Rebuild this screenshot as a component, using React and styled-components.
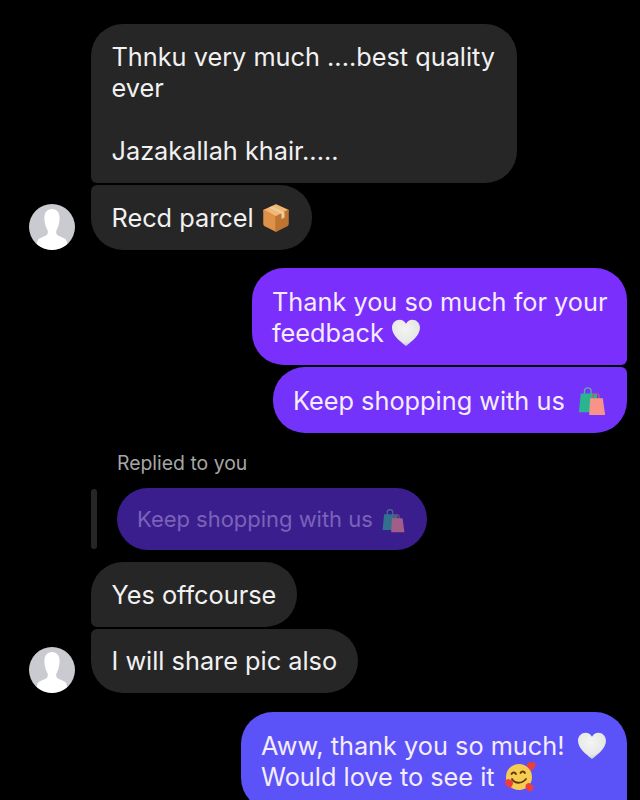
import styled, { createGlobalStyle } from "styled-components"

const GlobalStyle = createGlobalStyle`
    html, body {
        margin: 0;
        height: 800px;
        overflow: hidden;
        background: #000;
    }
`

const Thread = styled.main`
    width: 640px;
    height: 800px;
    overflow: hidden;
    box-sizing: border-box;
    padding: 24px 13px 0 29px;
    display: flex;
    flex-direction: column;
    background: #000;
    font-family: Inter, Roboto, "Liberation Sans", sans-serif;
    font-size: 25.3px;
    line-height: 31.5px;
`

const Group = styled.section`
    display: flex;
    flex-direction: column;
    gap: 2px;
    flex-shrink: 0;
    margin-bottom: ${({$after}) => $after || 0}px;
`

const Row = styled.div`
    display: flex;
    align-items: flex-end;
    justify-content: ${({$mine}) => $mine ? "flex-end" : "flex-start"};
    gap: 16px;
`

const AvatarSlot = styled.div`
    width: 46px;
    height: 46px;
    flex-shrink: 0;
`

const AvatarCircle = styled.svg`
    display: block;
    width: 46px;
    height: 46px;
    border-radius: 50%;
`

const Bubble = styled.div`
    box-sizing: border-box;
    flex-shrink: 0;
    width: ${({$width}) => $width ? `${$width}px` : "auto"};
    padding: ${({$mine}) => $mine ? "17.5px 0 16.5px 20px" : "16.5px 21px 16.5px 20.5px"};
    color: ${({$mine}) => $mine ? "#f5ecff" : "#f1f1f1"};
    background: ${({$color}) => $color || "#262626"};
    border-radius: ${({$corners}) => $corners};
    white-space: pre;
`

const RepliedLabel = styled.div`
    margin: 17.5px 0 12px 88px;
    color: #a6a6a6;
    font-size: 19.4px;
    line-height: 26px;
`

const ReplyRow = styled.div`
    display: flex;
    align-items: center;
    gap: 20px;
    margin: 0 0 12px 62px;
`

const ReplyBar = styled.div`
    width: 6px;
    height: 60px;
    border-radius: 3px;
    background: #262626;
`

const ReplyBubble = styled.div`
    box-sizing: border-box;
    width: 310px;
    height: 62px;
    padding: 2px 20px 0;
    display: flex;
    align-items: center;
    gap: 8px;
    border-radius: 31px;
    background: #3a1e8e;
    color: #7a62b8;
    font-size: 21.96px;
`

const EmojiSvg = styled.svg`
    display: inline-block;
    width: ${({$size}) => $size || 30}px;
    height: ${({$size}) => $size || 30}px;
    vertical-align: ${({$drop}) => $drop ?? -6}px;
    margin-left: ${({$gap}) => $gap ?? 0}px;
    opacity: ${({$dim}) => $dim ? 0.55 : 1};
    flex-shrink: 0;
`

const Avatar = () => (
    <AvatarSlot>
        <AvatarCircle viewBox="0 0 46 46">
            <rect width="46" height="46" fill="#cacbd1" />
            <path
                fill="#fff"
                d="M23 5c-5 0-7.800 4-7.600 9.500.2 4.800 1.400 8.800 3 11.500.8 1.400.6 3.800-.8 5-2.300 1.800-7 2.600-8.800 5.200-.8 1.200-1 2.600-1 4.300C11.500 44 17 46 23 46s11.500-2 15.200-5.500c0-1.700-.2-3.100-1-4.300-1.800-2.600-6.500-3.400-8.800-5.200-1.400-1.200-1.600-3.600-.8-5 1.600-2.700 2.800-6.700 3-11.500C30.800 9 28 5 23 5z"
            />
        </AvatarCircle>
    </AvatarSlot>
)

const ParcelEmoji = () => (
    <EmojiSvg viewBox="0 0 30 30">
        <g strokeLinejoin="round" strokeWidth="1.500">
            <path fill="#f4b670" stroke="#f4b670" d="M15 2 27 7.500 15 14 3 7.500z" />
            <path fill="#dd9149" stroke="#dd9149" d="M3 7.500 15 14v14L4 22.500c-.7-.4-1-1-1-1.800z" />
            <path fill="#bf7430" stroke="#bf7430" d="M27 7.500 15 14v14l11-5.500c.7-.4 1-1 1-1.800z" />
        </g>
        <path fill="#e8cb9f" d="M8 4.500 20.500 11v5l3-1.500v-5L11 3.200z" />
    </EmojiSvg>
)

const HeartEmoji = ({ $gap }) => (
    <EmojiSvg viewBox="0 0 30 30" $gap={$gap}>
        <defs>
            <radialGradient id="heartShade" cx="45%" cy="35%" r="70%">
                <stop offset="0%" stopColor="#f4f5f3" />
                <stop offset="70%" stopColor="#e6e8e5" />
                <stop offset="100%" stopColor="#bfc2c4" />
            </radialGradient>
        </defs>
        <path
            fill="url(#heartShade)"
            d="M15 28C8 22.500 1 17 1 9.800 1 5 4.700 1.800 8.600 1.800c2.700 0 5 1.400 6.400 3.900 1.400-2.500 3.700-3.900 6.400-3.900C25.300 1.800 29 5 29 9.800 29 17 22 22.500 15 28z"
        />
    </EmojiSvg>
)

const BagsEmoji = ({ $size, $dim, $gap }) => (
    <EmojiSvg viewBox="0 0 30 32" $size={$size} $dim={$dim} $gap={$gap}>
        <path fill="none" stroke="#5fa8a0" strokeWidth="1.500" d="M7 9V5c0-4 7-4 7 0v4" />
        <path fill="#2bb58f" d="M3 8h17l1.500 20H1z" />
        <path fill="none" stroke="#b0606a" strokeWidth="1.500" d="M16 14v-3c0-3.500 6.500-3.500 6.500 0v3" />
        <path fill="#f8938a" d="M13 13h13.500L29 31H12z" />
    </EmojiSvg>
)

const HugEmoji = () => (
    <EmojiSvg viewBox="0 0 32 32" $size={32} $drop={-7} $gap={2}>
        <circle cx="15" cy="16" r="13" fill="#f8cc4e" />
        <path fill="none" stroke="#5a3a1a" strokeWidth="1.800" strokeLinecap="round" d="M7.500 13c1-2 3.500-2 4.500 0M16.500 12c1-2 3.500-2 4.500 0" />
        <path fill="none" stroke="#5a3a1a" strokeWidth="1.800" strokeLinecap="round" d="M8 18c3 5 10 5 14 0" />
        <path fill="#ec3f3c" d="M26 1c-2 0-3 1.500-3 3 0 2.500 3 4.500 4.500 5.500C29 8.500 31.500 6.500 31.500 4c0-1.500-1-3-2.500-3-1 0-1.800.5-2 1.200C26.800 1.500 26.600 1 26 1z" />
        <path fill="#ec3f3c" d="M5 18c-2 0-4 1.500-4 3.500 0 3 3.500 5 5.500 5.500 1.500-1.500 3-4 2.500-6-.4-1.700-2-2.500-3-2.100C5.700 18.300 5.400 18 5 18z" />
        <path fill="#ec3f3c" d="M25 22c-2 0-3.500 1.500-3.500 3.500 0 2.500 3 4.500 5 5.500 1.500-1.500 3.500-3.500 3-5.500-.4-1.700-2-2.400-3-2-.3-.8-.9-1.500-1.500-1.500z" />
    </EmojiSvg>
)

const App = () => (
    <>
        <GlobalStyle />
        <Thread>
            <Group $after={18.5}>
                <Row>
                    <AvatarSlot />
                    <Bubble $width={426} $corners="32px 32px 32px 6px">
                        {"Thnku very much ....best quality\never\n\nJazakallah khair....."}
                    </Bubble>
                </Row>
                <Row>
                    <Avatar />
                    <Bubble $corners="6px 32px 32px 32px">
                        Recd parcel <ParcelEmoji />
                    </Bubble>
                </Row>
            </Group>

            <Group>
                <Row $mine>
                    <Bubble $mine $width={375} $color="#7a2ffd" $corners="32px 32px 6px 32px">
                        {"Thank you so much for your\nfeedback "}<HeartEmoji />
                    </Bubble>
                </Row>
                <Row $mine>
                    <Bubble $mine $width={354} $color="#7433fb" $corners="32px 6px 32px 32px">
                        Keep shopping with us <BagsEmoji $gap={5} />
                    </Bubble>
                </Row>
            </Group>

            <RepliedLabel>Replied to you</RepliedLabel>
            <ReplyRow>
                <ReplyBar />
                <ReplyBubble>
                    Keep shopping with us
                    <BagsEmoji $size={25} $dim />
                </ReplyBubble>
            </ReplyRow>

            <Group $after={19}>
                <Row>
                    <AvatarSlot />
                    <Bubble $corners="32px 32px 32px 6px">Yes offcourse</Bubble>
                </Row>
                <Row>
                    <Avatar />
                    <Bubble $corners="6px 32px 32px 32px">I will share pic also</Bubble>
                </Row>
            </Group>

            <Group>
                <Row $mine>
                    <Bubble $mine $width={386} $color="#5b52f8" $corners="32px 32px 6px 32px">
                        Aww, thank you so much! <HeartEmoji $gap={5} />{"\n"}Would love to see it <HugEmoji />
                    </Bubble>
                </Row>
            </Group>
        </Thread>
    </>
)

export default App
